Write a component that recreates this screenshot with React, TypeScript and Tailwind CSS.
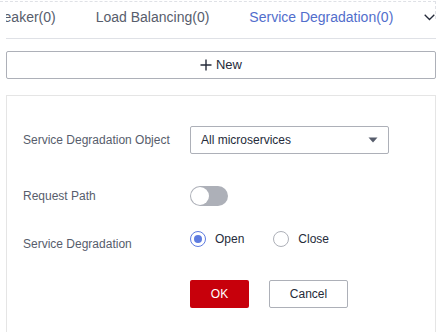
import React from 'react';

const TABS = [
  { label: 'Circuit Breaker(0)', active: false },
  { label: 'Load Balancing(0)', active: false },
  { label: 'Service Degradation(0)', active: true },
];

function Radio({ checked, label }: { checked: boolean; label: string }) {
  return (
    <label className="flex items-center gap-[9px] cursor-pointer">
      <span
        className={`w-[16px] h-[16px] rounded-full border flex items-center justify-center bg-white ${
          checked ? 'border-[#5e7ce0]' : 'border-[#adb0b8]'
        }`}
      >
        {checked && <span className="w-[8px] h-[8px] rounded-full bg-[#5e7ce0]" />}
      </span>
      <span className="text-[12px] text-[#252b3a]">{label}</span>
    </label>
  );
}

export default function App() {
  return (
    <div
      className="w-[442px] h-[332px] bg-white overflow-hidden relative"
      style={{ fontFamily: '"Liberation Sans", Arial, sans-serif' }}
    >
      <div className="absolute left-0 top-[1px] w-[436px] h-[18px] border-t border-r border-dashed border-[#dfe1e6]" />

      <div className="px-[6px]">
        {/* Tabs */}
        <div className="h-[39px] border-b border-[#dfe1e6] flex items-center relative">
          <div className="flex-1 overflow-hidden h-full">
            <div className="flex items-center h-full ml-[-60px] gap-[40px] pb-[4px]">
              {TABS.map((t) => (
                <span
                  key={t.label}
                  className={`whitespace-nowrap text-[14px] ${t.active ? 'text-[#526ecc]' : 'text-[#575d6c]'}`}
                >
                  {t.label}
                </span>
              ))}
            </div>
          </div>
          <div className="w-[20px] h-full flex items-center justify-end pr-[1px] pb-[3px]">
            <svg width="11" height="7" viewBox="0 0 11 7" fill="none">
              <path d="M0.7 0.7 L5.5 5.5 L10.3 0.7" stroke="#252b3a" strokeWidth="1.3" />
            </svg>
          </div>
        </div>

        {/* New button */}
        <button className="mt-[12px] w-full h-[28px] border border-[#adb0b8] rounded-[2px] flex items-center justify-center gap-[4px] text-[13px] text-[#252b3a] bg-white">
          <svg width="12" height="12" viewBox="0 0 12 12">
            <path d="M6 0.5 V11.5 M0.5 6 H11.5" stroke="#252b3a" strokeWidth="1.4" />
          </svg>
          New
        </button>

        {/* Form card */}
        <div className="mt-[16px] border border-[#e5e5e5] h-[260px] pl-[16px] pt-[30px]">
          <div className="flex items-center h-[28px]">
            <span className="w-[167px] text-[12px] text-[#575d6c]">Service Degradation Object</span>
            <div className="w-[199px] h-[28px] border border-[#adb0b8] rounded-[2px] flex items-center justify-between pl-[10px] pr-[10px]">
              <span className="text-[12px] text-[#252b3a]">All microservices</span>
              <svg width="10" height="6" viewBox="0 0 10 6">
                <path d="M0.5 0.5 H9.5 L5 5.5 Z" fill="#575d6c" />
              </svg>
            </div>
          </div>

          <div className="flex items-center h-[22px] mt-[31px]">
            <span className="w-[167px] text-[12px] text-[#575d6c]">Request Path</span>
            <span className="w-[38px] h-[20px] rounded-full bg-[#adb0b8] relative">
              <span className="absolute left-[1px] top-[1px] w-[18px] h-[18px] rounded-full bg-white" />
            </span>
          </div>

          <div className="flex items-start mt-[23px]">
            <span className="w-[167px] text-[12px] text-[#575d6c] pt-[5px]">Service Degradation</span>
            <div className="flex items-center gap-[29px]">
              <Radio checked label="Open" />
              <Radio checked={false} label="Close" />
            </div>
          </div>

          <div className="flex items-center gap-[20px] ml-[167px] mt-[27px]">
            <button className="w-[59px] h-[28px] rounded-[2px] bg-[#c7000b] text-white text-[12px]">OK</button>
            <button className="w-[79px] h-[28px] rounded-[2px] border border-[#adb0b8] bg-white text-[#252b3a] text-[12px]">
              Cancel
            </button>
          </div>
        </div>
      </div>
    </div>
  );
}
